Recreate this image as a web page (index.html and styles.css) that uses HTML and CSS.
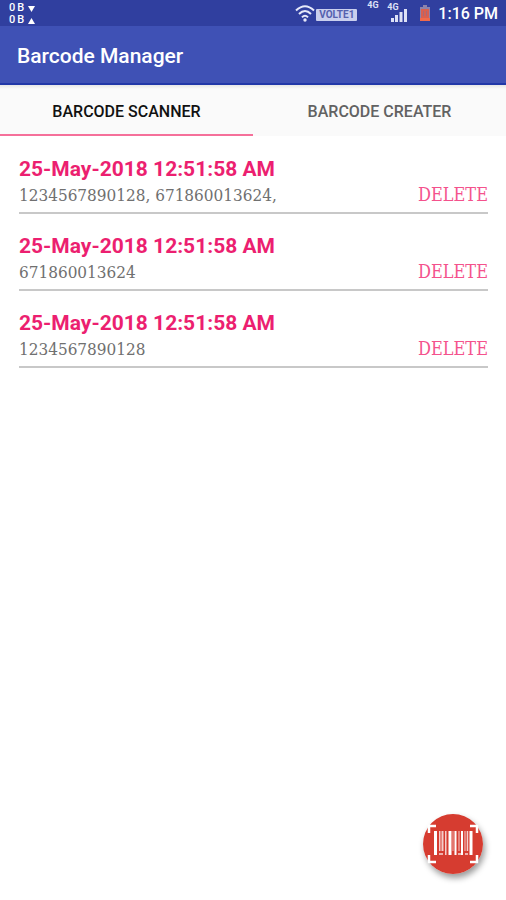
FILE: index.html
```html
<!DOCTYPE html>
<html lang="en">
<head>
<meta charset="utf-8">
<meta name="viewport" content="width=device-width, initial-scale=1">
<title>Barcode Manager</title>
<link rel="stylesheet" href="styles.css">
</head>
<body>
<div class="status">
  <div class="traffic">
    <div class="rate"><span>0</span><span>B</span><svg width="7" height="7" viewBox="0 0 7 7"><path d="M0 1h7L3.500 7z"/></svg></div>
    <div class="rate"><span>0</span><span>B</span><svg width="7" height="7" viewBox="0 0 7 7"><path d="M0 7h7L3.500 1z"/></svg></div>
  </div>
  <div class="indicators">
    <svg class="wifi" width="20" height="18" viewBox="0 0 20 18"><g fill="none" stroke="#e6e9fa" stroke-width="2"><path d="M1 6.500Q10-2 19 6.500"/><path d="M4 10Q10 4 16 10"/><path d="M7 13.300Q10 10 13 13.300"/></g><circle cx="10" cy="16" r="1.700" fill="#e6e9fa"/></svg>
    <span class="volte">VOLTE1</span>
    <span class="net">4G</span>
    <span class="net cell">4G<svg width="16" height="13" viewBox="0 0 16 13"><path d="M0 9h3v4H0zM4 6h3v7H4zM8.500 3h3v10h-3zM13 0h3v13h-3z"/></svg></span>
    <svg class="battery" width="10" height="16" viewBox="0 0 10 16"><path fill="#8d83ab" d="M3 0h4v2h3v14H0V2h3z"/><path fill="#d9604f" d="M1 4h8v9H1z"/><path fill="#a76878" d="M3 6h1v5H3zM6 6h1v5H6z"/><path fill="#ef6a4c" d="M0 13h10v3H0z"/></svg>
    <span class="clock">1:16 PM</span>
  </div>
</div>
<header class="appbar"><h1>Barcode Manager</h1></header>
<nav class="tabs">
  <button class="tab active" type="button">BARCODE SCANNER</button>
  <button class="tab" type="button">BARCODE CREATER</button>
</nav>
<main class="list">
  <article class="item">
    <h2>25-May-2018 12:51:58 AM</h2>
    <div class="row"><span>1234567890128, 671860013624,</span><button class="delete" type="button">DELETE</button></div>
  </article>
  <article class="item">
    <h2>25-May-2018 12:51:58 AM</h2>
    <div class="row"><span>671860013624</span><button class="delete" type="button">DELETE</button></div>
  </article>
  <article class="item">
    <h2>25-May-2018 12:51:58 AM</h2>
    <div class="row"><span>1234567890128</span><button class="delete" type="button">DELETE</button></div>
  </article>
</main>
<button class="fab" type="button" aria-label="Scan barcode">
  <svg width="60" height="60" viewBox="0 0 60 60">
    <circle cx="30" cy="30" r="30" fill="#d63c30"/>
    <g fill="#fff">
      <path d="M11 17h3v24h-3zM25.500 17h3v24h-3zM31.500 17h2v24h-2zM38 17h2v24h-2zM46.500 17h3v24h-3z"/>
      <path opacity=".75" d="M16 17h1.500v20H16zM18.500 17h2v20h-2zM22 17h1.500v24H22zM35.500 17h1v20h-1zM41.500 17h1v20h-1zM43.700 17h1.500v20h-1.500z"/>
      <path opacity=".6" d="M29.500 17h1v20h-1zM16 39h4v2h-4zM35 39h3v2h-3zM42 39h3v2h-3z"/>
    </g>
    <path fill="none" stroke="#fff" stroke-width="2.500" d="M6 19v-7h7M47 12h7v7M6 41v7h7M47 48h7v-7"/>
  </svg>
</button>
</body>
</html>
```
FILE: styles.css
```css
* {
  box-sizing: border-box;
}

body {
  margin: 0;
  min-height: 100vh;
  background: #fff;
  font-family: Roboto, sans-serif;
}

h1,
h2 {
  margin: 0;
}

button {
  padding: 0;
  border: 0;
  background: none;
  font: inherit;
  cursor: pointer;
}

svg {
  display: block;
}

.status {
  display: flex;
  justify-content: space-between;
  height: 26px;
  padding: 0 8px 0 9px;
  background: #303f9f;
  color: #fff;
}

.traffic {
  padding-top: 2px;
  font-size: 11px;
  font-weight: 500;
  line-height: 12px;
}

.rate {
  display: flex;
  align-items: center;
  gap: 2px;
}

.rate svg {
  margin-left: 2px;
  fill: #fff;
}

.indicators {
  display: flex;
  align-items: flex-start;
}

.wifi {
  margin-top: 4px;
}

.volte {
  width: 41px;
  margin: 9px 10px 0 1px;
  border-radius: 1px;
  background: #c9cfee;
  color: #5561ae;
  font-size: 10px;
  font-weight: 700;
  line-height: 12px;
  text-align: center;
}

.net {
  width: 20px;
  color: #dde1f6;
  font-size: 9px;
  font-weight: 700;
  line-height: 10px;
}

.cell {
  width: 33px;
  padding-top: 2px;
}

.cell svg {
  margin: -3px 0 0 4px;
  fill: #dde1f6;
}

.battery {
  margin: 5px 8px 0 0;
}

.clock {
  font-size: 16px;
  font-weight: 500;
  line-height: 28px;
}

.appbar {
  height: 59px;
  padding: 0 17px;
  border-bottom: 2px solid #2238a8;
  background: #3f51b5;
  color: #fff;
}

.appbar h1 {
  font-size: 21px;
  font-weight: 500;
  line-height: 60px;
}

.tabs {
  display: grid;
  grid-template-columns: 1fr 1fr;
  height: 51px;
  background: linear-gradient(#e6e6e6, #fafafa 4px);
}

.tab {
  padding-top: 3px;
  border-bottom: 2px solid transparent;
  color: #626262;
  font-size: 16px;
  font-weight: 500;
}

.active {
  border-color: #f5709a;
  color: #111;
}

.list {
  padding: 1px 18px 0 19px;
}

.item {
  padding-top: 20px;
  border-bottom: 2px solid #c8c8c8;
}

.item h2 {
  color: #ec1f70;
  font-size: 21px;
  font-weight: 700;
  line-height: 25px;
}

.row {
  display: flex;
  justify-content: space-between;
  height: 30px;
  color: #707070;
  font-family: "Roboto Slab", "DejaVu Serif Condensed", "Liberation Serif", serif;
  font-size: 17px;
  line-height: 26px;
}

.delete {
  height: 26px;
  color: #f4528c;
  font-size: 18px;
}

.fab {
  position: fixed;
  right: 23px;
  bottom: 26px;
  border-radius: 50%;
  box-shadow: 2px 4px 6px rgba(0, 0, 0, .4);
}
```
